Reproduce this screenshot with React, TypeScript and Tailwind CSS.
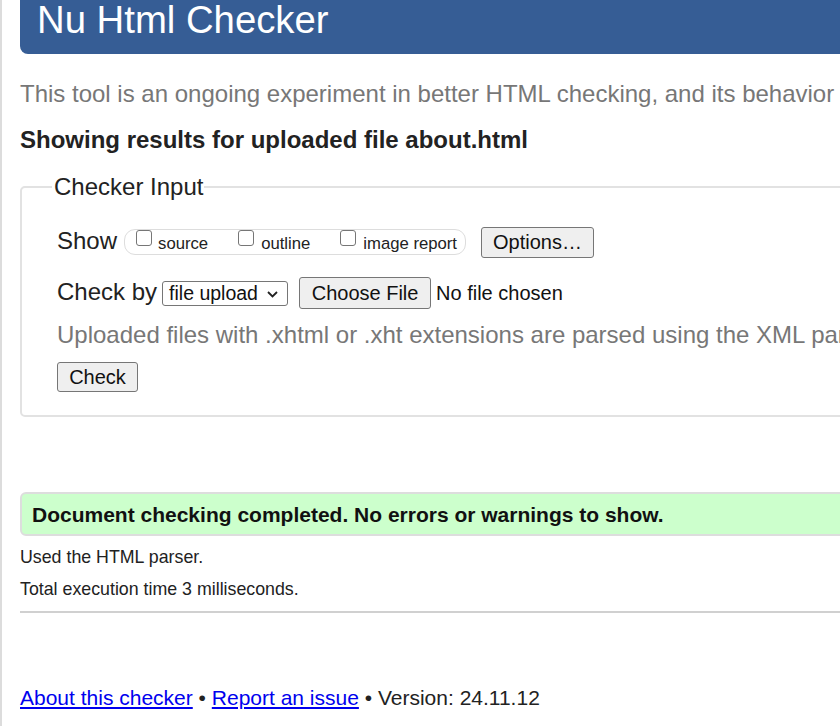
import React from "react";

function Checkbox() {
  return (
    <span className="inline-block w-[16px] h-[16px] mb-[3px] align-baseline border border-[#767676] rounded-[3px] bg-white" />
  );
}

export default function App() {
  return (
    <div className="w-[840px] h-[726px] overflow-hidden bg-white border-l-2 border-[#dcdcdc] font-['Liberation_Sans',Arial,sans-serif] text-[#222]">
      <div className="w-[1100px] pl-[18px]">
        <div className="h-[54px] bg-[#365d95] rounded-bl-[8px] pl-[17px]">
          <h1 className="text-[38.3px] leading-[38px] text-white pt-[1px] whitespace-nowrap">Nu Html Checker</h1>
        </div>

        <p className="mt-[28px] text-[24px] leading-[24px] text-[#777] whitespace-nowrap">
          This tool is an ongoing experiment in better HTML checking, and its behavior remains subject to change
        </p>

        <p className="mt-[22px] text-[24px] leading-[24px] font-bold text-[#222] whitespace-nowrap">
          Showing results for uploaded file about.html
        </p>

        <fieldset className="mt-[23px] border-2 border-[#e2e2e2] rounded-[5px] pl-[35px] pt-[28px] pb-[23px]">
          <legend className="ml-[-5px] pl-[2px] pr-[1px] text-[24px] leading-[24px] text-[#222]">Checker Input</legend>

          <div className="flex items-baseline whitespace-nowrap">
            <span className="text-[24px] leading-[24px]">Show</span>
            <span className="ml-[7px] inline-block h-[26px] border border-[#dddddd] rounded-[11px] pl-[11px] pr-[8px] text-[16.7px] leading-[24px]">
              <Checkbox />
              <span className="ml-[6px]">source</span>
              <span className="ml-[30px]"><Checkbox /></span>
              <span className="ml-[7px]">outline</span>
              <span className="ml-[30px]"><Checkbox /></span>
              <span className="ml-[7px]">image report</span>
            </span>
            <button className="ml-[15px] h-[31px] w-[113px] border border-[#767676] rounded-[3px] bg-[#efefef] text-[20px] leading-[24px] pt-[2px] pb-[3px] text-[#111]">
              Options…
            </button>
          </div>

          <div className="mt-[19px] flex items-baseline whitespace-nowrap">
            <span className="text-[24px] leading-[24px]">Check by</span>
            <span className="ml-[5px] inline-flex items-baseline w-[126px] h-[25px] border border-[#767676] rounded-[3px] pl-[6px] pt-[1px] text-[19.5px] leading-[21px] text-[#111]">
              <span>file upload</span>
              <svg className="ml-auto mr-[9px] self-center" width="11" height="7" viewBox="0 0 11 7">
                <path d="M1 1 L5.5 5.5 L10 1" fill="none" stroke="#222" strokeWidth="1.8" />
              </svg>
            </span>
            <button className="ml-[11px] h-[32px] w-[132px] border border-[#767676] rounded-[3px] bg-[#efefef] text-[20px] leading-[24px] pt-[3px] pb-[3px] text-[#111]">
              Choose File
            </button>
            <span className="ml-[5px] text-[20px] leading-[24px] text-[#111]">No file chosen</span>
          </div>

          <p className="mt-[14px] text-[24px] leading-[24px] text-[#777] whitespace-nowrap">
            Uploaded files with .xhtml or .xht extensions are parsed using the XML parser.
          </p>

          <button className="mt-[15px] h-[30px] w-[81px] border border-[#767676] rounded-[3px] bg-[#efefef] text-[20px] leading-[24px] pt-[2px] pb-[2px] text-[#111]">
            Check
          </button>
        </fieldset>

        <div className="mt-[75px] border-2 border-[#dddddd] rounded-l-[6px] bg-[#ccffcc] pl-[10px] pt-[10px] pb-[9px]">
          <p className="text-[21px] leading-[21px] font-bold text-[#111] whitespace-nowrap">
            Document checking completed. No errors or warnings to show.
          </p>
        </div>

        <p className="mt-[11px] text-[17.8px] leading-[20px] text-[#222]">Used the HTML parser.</p>
        <p className="mt-[12px] text-[17.8px] leading-[20px] text-[#222]">Total execution time 3 milliseconds.</p>

        <div className="mt-[12px] h-[2px] bg-[#d0d0d0]" />

        <p className="mt-[73px] text-[21px] leading-[24px] text-[#222] whitespace-nowrap">
          <a className="text-[#0000ee] underline">About this checker</a>
          {" • "}
          <a className="text-[#0000ee] underline">Report an issue</a>
          {" • Version: 24.11.12"}
        </p>
      </div>
    </div>
  );
}
